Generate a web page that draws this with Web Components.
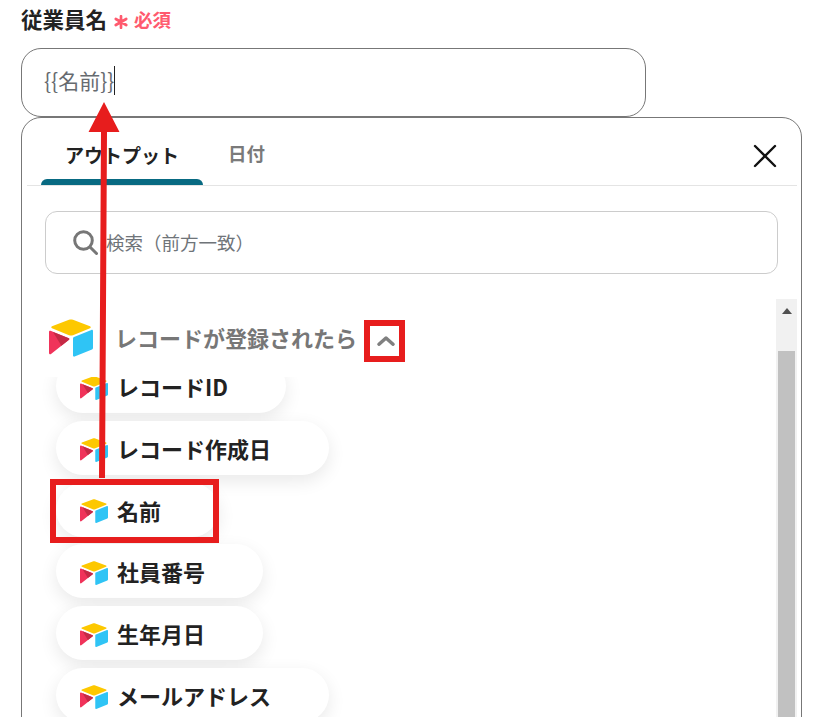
<!DOCTYPE html>
<html lang="ja">
<head>
<meta charset="utf-8">
<title>従業員名</title>
<style>
  html, body { margin: 0; height: 717px; overflow: hidden; background: #fff; }
  body { font-family: "Noto Sans CJK JP", "Noto Sans", sans-serif; color: #222; }
</style>
</head>
<body>
<employee-form></employee-form>

<script>
const SANS = '"Noto Sans CJK JP", "Noto Sans", sans-serif';

class airtableLogo extends HTMLElement{
  constructor(){
    super();
    this.attachShadow({mode: "open"});
    this.shadowRoot.innerHTML = `
    <style>
      :host { display: inline-flex; width: var(--logo-size, 28px); flex: none; }
      svg { display: block; width: 100%; height: auto; }
    </style>
    <svg viewBox="0 0 44 38" aria-hidden="true">
      <path d="M20 .8 3 7.200c-1 .4-1 1.600 0 2l17 7c1.400.5 2.600.5 4 0l17-7c1-.4 1-1.600 0-2L24 .8c-1.400-.5-2.600-.5-4 0z" fill="#fdc800"/>
      <path d="M24 19.500v17c0 .9.8 1.400 1.600 1.100L43 30.500c.6-.2 1-.8 1-1.400V12c0-.9-.8-1.400-1.600-1.100L25 18c-.6.2-1 .8-1 1.500z" fill="#2fc4f5"/>
      <path d="M0 13v21c0 1 1.200 1.600 2 1l18-14.200c.6-.5.4-1.300-.2-1.500L1.500 11.800C.7 11.500 0 12 0 13z" fill="#f0335a"/>
      <path d="M4 13 19.800 19.300c.6.2.8 1 .2 1.500L12.400 26.800z" fill="#c42a45"/>
    </svg>`;
  }
}
customElements.define("airtable-logo", airtableLogo);

class outputPill extends HTMLElement{
  constructor(){
    super();
    this.attachShadow({mode: "open"});
    this.shadowRoot.innerHTML = `
    <style>
      :host {
        display: flex;
        align-items: center;
        gap: 9px;
        box-sizing: border-box;
        width: fit-content;
        height: 54px;
        padding: 0 58px 0 24px;
        border-radius: 27px;
        background: #fff;
        box-shadow: 0 6px 18px rgba(0,0,0,0.09);
        font: 700 22px/1 ${SANS};
        color: #222;
        white-space: nowrap;
      }
      airtable-logo { --logo-size: 28px; margin-top: 4px; }
    </style>
    <airtable-logo></airtable-logo><span><slot></slot></span>`;
  }
}
customElements.define("output-pill", outputPill);

class searchBox extends HTMLElement{
  constructor(){
    super();
    this.attachShadow({mode: "open"});
    this.shadowRoot.innerHTML = `
    <style>
      :host {
        display: flex;
        align-items: center;
        box-sizing: border-box;
        height: 63px;
        padding-left: 27px;
        gap: 8px;
        border: 1px solid #ccc;
        border-radius: 12px;
        font: 400 18.5px/1 ${SANS};
        color: #6f7479;
      }
      svg { width: 25px; height: 25px; flex: none; }
    </style>
    <svg viewBox="0 0 25 25" fill="none" stroke="#777" stroke-width="3" stroke-linecap="round">
      <circle cx="10.500" cy="10.500" r="8.800"/><path d="M17 17l6.500 6.500"/>
    </svg>
    <slot></slot>`;
  }
}
customElements.define("search-box", searchBox);

class tabBar extends HTMLElement{
  constructor(){
    super();
    this.attachShadow({mode: "open"});
    this.shadowRoot.innerHTML = `
    <style>
      :host {
        display: flex;
        align-items: stretch;
        box-sizing: border-box;
        height: 68px;
        margin: 0 4px 0 5px;
        padding-left: 14px;
        border-bottom: 1px solid #e4e4e4;
        font: 700 19px/1 ${SANS};
      }
      .tab {
        display: flex;
        align-items: center;
        box-sizing: border-box;
        height: 67px;
        padding: 5px 24px 0;
        white-space: nowrap;
        position: relative;
      }
      .on { color: #222; }
      .on::after {
        content: "";
        position: absolute;
        left: 0;
        right: 0;
        bottom: 0;
        height: 6px;
        background: #086a82;
        border-radius: 6px 6px 0 0;
      }
      .off { color: #7a7a7a; font-size: 18.500px; padding: 3px 25px 0; }
      .close { margin: 0 19px 0 auto; align-self: center; width: 26px; height: 26px; position: relative; top: 4px; }
    </style>
    <div class="tab on">アウトプット</div>
    <div class="tab off">日付</div>
    <svg class="close" viewBox="0 0 26 26" stroke="#111" stroke-width="2.4" stroke-linecap="round">
      <path d="M3 3l20 20M23 3L3 23"/>
    </svg>`;
  }
}
customElements.define("tab-bar", tabBar);

class outputGroup extends HTMLElement{
  constructor(){
    super();
    this.attachShadow({mode: "open"});
    this.shadowRoot.innerHTML = `
    <style>
      :host { display: block; position: relative; }
      .head {
        display: flex;
        align-items: center;
        height: 78px;
        padding-left: 27px;
        font: 700 22px/1 ${SANS};
        color: #777;
        white-space: nowrap;
      }
      .head airtable-logo { --logo-size: 44px; margin-right: 22px; }
      .head span { margin-bottom: 2px; }
      .chev { width: 18px; height: 10px; margin-left: 20px; margin-top: 6px; }
      .list { height: 340px; overflow: hidden; padding-left: 34px; }
      .inner { display: flex; flex-direction: column; gap: 7.750px; margin-top: -18px; }
    </style>
    <div class="head">
      <airtable-logo></airtable-logo>
      <span>レコードが登録されたら</span>
      <svg class="chev" viewBox="0 0 18 10" fill="none" stroke="#808080" stroke-width="3.500" stroke-linecap="round" stroke-linejoin="round">
        <path d="M2 8.200 9 2l7 6.200"/>
      </svg>
    </div>
    <div class="list"><div class="inner"><slot></slot></div></div>`;
  }
}
customElements.define("output-group", outputGroup);

class scrollRail extends HTMLElement{
  constructor(){
    super();
    this.attachShadow({mode: "open"});
    this.shadowRoot.innerHTML = `
    <style>
      :host {
        display: block;
        flex: none;
        box-sizing: border-box;
        width: 21px;
        background: #f1f1f1;
        padding: 0 2px;
      }
      .btn { display: flex; justify-content: center; padding-top: 9px; height: 52px; box-sizing: border-box; }
      .thumb { height: 400px; background: #c1c1c1; }
    </style>
    <div class="btn">
      <svg width="10" height="6" viewBox="0 0 10 6"><path d="M5 0l5 6H0z" fill="#505050"/></svg>
    </div>
    <div class="thumb"></div>`;
  }
}
customElements.define("scroll-rail", scrollRail);

class outputPanel extends HTMLElement{
  constructor(){
    super();
    this.attachShadow({mode: "open"});
    this.shadowRoot.innerHTML = `
    <style>
      :host {
        display: block;
        box-sizing: border-box;
        width: 781px;
        height: 640px;
        border: 1px solid #777;
        border-radius: 20px;
        background: #fff;
        overflow: hidden;
      }
      search-box { margin: 25px 23px 0; }
      .scroll { display: flex; margin-top: 25px; padding-right: 4px; }
      output-group { flex: 1; min-width: 0; }
    </style>
    <tab-bar></tab-bar>
    <search-box>検索（前方一致）</search-box>
    <div class="scroll">
      <output-group><slot></slot></output-group>
      <scroll-rail></scroll-rail>
    </div>`;
  }
}
customElements.define("output-panel", outputPanel);

class employeeForm extends HTMLElement{
  constructor(){
    super();
    this.attachShadow({mode: "open"});
    this.shadowRoot.innerHTML = `
    <style>
      :host { display: block; position: relative; height: 717px; overflow: hidden; padding-left: 21px; font-family: ${SANS}; }
      .label { display: flex; align-items: center; height: 48px; padding-bottom: 10px; box-sizing: border-box; white-space: nowrap; }
      .name { font: 700 21.500px/1 ${SANS}; color: #222; }
      .star { margin: 6px 6px 0 7px; width: 14px; height: 14px; }
      .req { font: 700 18.500px/1 ${SANS}; color: #ff5a6e; }
      .input {
        display: flex;
        align-items: center;
        box-sizing: border-box;
        width: 625px;
        height: 69px;
        padding: 0 22px 4px 22px;
        border: 1px solid #777;
        border-radius: 20px;
        font: 400 21px/1 ${SANS};
        color: #666b70;
      }
      .caret { width: 1px; height: 29px; background: #222; margin-top: 0; }
      .mark { position: absolute; box-sizing: border-box; border: 6px solid #e71d1d; }
      .arrow { position: absolute; left: 0; top: 0; pointer-events: none; }
    </style>
    <div class="label">
      <span class="name">従業員名</span>
      <svg class="star" viewBox="0 0 14 14" stroke="#ff5a6e" stroke-width="2.700" stroke-linecap="round">
        <path d="M7 1.200v11.600M1.800 4l10.400 6M12.200 4 1.800 10"/>
      </svg>
      <span class="req">必須</span>
    </div>
    <div class="input"><span>{{名前}}</span><span class="caret"></span></div>
    <output-panel><slot></slot></output-panel>
    <div class="mark" style="left:364px;top:320px;width:41px;height:42px"></div>
    <div class="mark" style="left:50px;top:479px;width:169px;height:64px"></div>
    <svg class="arrow" width="817" height="717">
      <path d="M99 478 101 132H88.500L104 102 119.500 132H107L105 478z" fill="#e71d1d"/>
    </svg>`;
  }
}
customElements.define("employee-form", employeeForm);

// 一覧の中身
const pills = ["レコードID", "レコード作成日", "名前", "社員番号", "生年月日", "メールアドレス"];
const form = document.querySelector("employee-form");
pills.forEach(text => {
  const pill = document.createElement("output-pill");
  pill.textContent = text;
  form.appendChild(pill);
});
</script>
</body>
</html>
